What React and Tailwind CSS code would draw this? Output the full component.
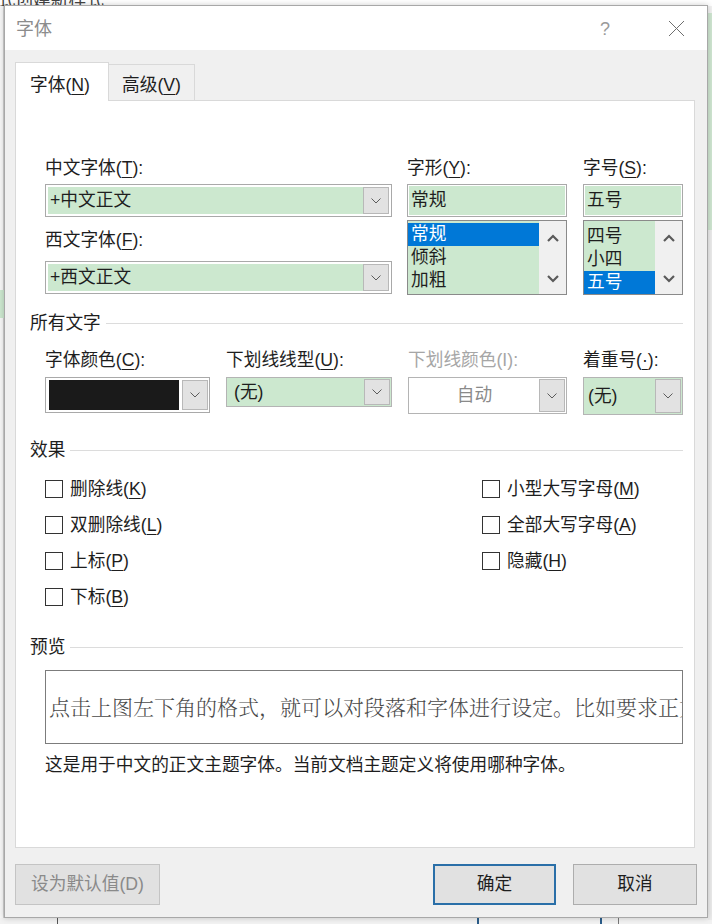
import React from 'react';

// 下划线快捷键字母
const K = ({ c }) => <span className="underline underline-offset-[3px] decoration-1">{c}</span>;

const Chevron = () => (
  <svg width="10" height="6" viewBox="0 0 10 6">
    <path d="M0.5 0.5 L5 5 L9.5 0.5" fill="none" stroke="#5c5c5c" strokeWidth="1" />
  </svg>
);

const ArrowUp = () => (
  <svg width="12" height="8" viewBox="0 0 12 8">
    <path d="M1 7 L6 2 L11 7" fill="none" stroke="#5a5a5a" strokeWidth="2.2" />
  </svg>
);

const ArrowDown = () => (
  <svg width="12" height="8" viewBox="0 0 12 8">
    <path d="M1 1 L6 6 L11 1" fill="none" stroke="#5a5a5a" strokeWidth="2.2" />
  </svg>
);

const DropBtn = () => (
  <div className="w-[26px] h-full flex items-center justify-center border border-[#b8b8b8] bg-[#e2e2e2]">
    <Chevron />
  </div>
);

const Label = ({ children, disabled }) => (
  <div
    className={
      disabled
        ? 'h-[24px] leading-[24px] whitespace-nowrap text-[#a6a6a6]'
        : 'h-[24px] leading-[24px] whitespace-nowrap text-[#1e1e1e]'
    }
  >
    {children}
  </div>
);

const Section = ({ title }) => (
  <div className="h-[24px] flex items-center">
    <span className="leading-[24px] text-[#1e1e1e]">{title}</span>
    <div className="flex-1 ml-[5px] h-px bg-[#dcdcdc]" />
  </div>
);

const GreenCombo = ({ text }) => (
  <div className="h-[33px] border border-[#a9a9a9] bg-white p-[2px] flex">
    <div className="flex-1 bg-[#cce8cf] flex items-center pl-[2px] text-[#1e1e1e]">{text}</div>
    <DropBtn />
  </div>
);

const ListBox = ({ items, selected, pt }) => (
  <div className="mt-[3px] h-[75px] border border-[#8a8a8a] bg-[#cce8cf] flex">
    <div className={pt}>
      {items.map((it) => (
        <div
          key={it}
          className={
            it === selected
              ? 'h-[23px] leading-[23px] pl-[3px] bg-[#0078d7] text-white'
              : 'h-[23px] leading-[23px] pl-[3px] text-[#1e1e1e]'
          }
        >
          {it}
        </div>
      ))}
    </div>
    <div className="w-[27px] bg-[#f0f0f0] flex flex-col items-center justify-between pt-[13px] pb-[11px]">
      <ArrowUp />
      <ArrowDown />
    </div>
  </div>
);

const Check = ({ label, k }) => (
  <div className="h-[36px] flex items-center">
    <div className="w-[18px] h-[18px] border border-[#333] bg-white" />
    <span className="ml-[7px] text-[#1e1e1e] whitespace-nowrap">
      {label}(<K c={k} />)
    </span>
  </div>
);

export default function App() {
  return (
    <div className="relative w-[712px] h-[924px] overflow-hidden bg-[#f2f2f2] font-['Liberation_Sans','Noto_Sans_CJK_SC',sans-serif] text-[17.7px]">
      {/* 背景里的 Word 窗口碎片 */}
      <div className="absolute left-0 top-0 w-[712px] h-[6px] bg-white overflow-hidden">
        <div className="absolute left-[-20px] top-[-13px] text-[#444] whitespace-nowrap">格式创建新样式</div>
      </div>
      <div className="absolute left-0 top-[6px] w-[4px] h-[912px] bg-[#f7f7f7] border-r border-[#cfcfcf]" />
      <div className="absolute left-0 top-[290px] w-[4px] h-[28px] bg-[#cce8cf]" />
      <div className="absolute right-0 top-[13px] w-[4px] h-[217px] bg-[#cfe6d1]" />
      <div className="absolute right-0 top-[230px] w-[4px] h-[690px] bg-[#ececec]" />
      <div className="absolute left-[57px] top-[918px] w-px h-[6px] bg-[#555]" />
      <div className="absolute left-[477px] top-[918px] w-[2px] h-[6px] bg-[#2a5d8a]" />
      <div className="absolute left-[600px] top-[918px] w-[2px] h-[6px] bg-[#2a5d8a]" />
      <div className="absolute left-[618px] top-[918px] w-px h-[6px] bg-[#777]" />

      {/* 对话框 */}
      <div className="absolute left-[4px] top-[5px] w-[704px] h-[913px] border border-[#a8a8a8] bg-[#f0f0f0] flex flex-col shadow-[0_0_6px_rgba(0,0,0,0.2)]">
        {/* 标题栏 */}
        <div className="h-[44px] bg-white flex items-center pl-[11px] pr-[22px]">
          <span className="text-[18px] text-[#8c8c8c] pt-[2px]">字体</span>
          <span className="ml-auto text-[18px] text-[#9a9a9a] pt-[2px]">?</span>
          <svg className="ml-[58px]" width="17" height="17" viewBox="0 0 17 17">
            <path d="M1 1 L16 16 M16 1 L1 16" stroke="#6e6e6e" strokeWidth="1" />
          </svg>
        </div>

        <div className="flex-1 flex flex-col pl-[10px] pr-[12px]">
          {/* 选项卡 */}
          <div className="mt-[12px] flex items-end">
            <div className="relative z-10 -mb-px w-[94px] h-[39px] bg-white border border-b-0 border-[#d9d9d9] flex items-center pl-[14px] pt-[6px] text-[#1e1e1e]">
              字体(<K c="N" />)
            </div>
            <div className="w-[86px] h-[36px] bg-[#f0f0f0] border border-l-0 border-b-0 border-[#d9d9d9] flex items-center pl-[13px] pt-[6px] text-[#1e1e1e]">
              高级(<K c="V" />)
            </div>
          </div>

          {/* 面板 */}
          <div className="h-[748px] bg-white border border-[#d9d9d9] pl-[14px] pr-[11px] pt-[55px]">
            <div className="ml-[15px] flex">
              <div className="w-[347px]">
                <Label>中文字体(<K c="T" />):</Label>
                <div className="mt-[4px]">
                  <GreenCombo text="+中文正文" />
                </div>
                <div className="mt-[11px]">
                  <Label>西文字体(<K c="F" />):</Label>
                </div>
                <div className="mt-[9px]">
                  <GreenCombo text="+西文正文" />
                </div>
              </div>
              <div className="ml-[15px] w-[160px]">
                <Label>字形(<K c="Y" />):</Label>
                <div className="mt-[4px] h-[33px] border border-[#a9a9a9] bg-white p-px">
                  <div className="h-full bg-[#cce8cf] flex items-center pl-[2px] text-[#1e1e1e]">常规</div>
                </div>
                <ListBox items={['常规', '倾斜', '加粗']} selected="常规" pt="flex-1 pt-[2px]" />
              </div>
              <div className="ml-[16px] w-[100px]">
                <Label>字号(<K c="S" />):</Label>
                <div className="mt-[4px] h-[33px] border border-[#a9a9a9] bg-white p-px">
                  <div className="h-full bg-[#cce8cf] flex items-center pl-[2px] text-[#1e1e1e]">五号</div>
                </div>
                <ListBox items={['四号', '小四', '五号']} selected="五号" pt="flex-1 pt-[4px]" />
              </div>
            </div>

            <div className="mt-[16px]">
              <Section title="所有文字" />
            </div>

            <div className="ml-[15px] mt-[13px] flex items-start">
              <div className="w-[165px]">
                <Label>字体颜色(<K c="C" />):</Label>
                <div className="mt-[5px] h-[36px] border border-[#a9a9a9] bg-white flex pl-[3px] pr-px py-[2px]">
                  <div className="flex-1 bg-[#1a1a1a]" />
                  <div className="ml-[3px]">
                    <DropBtn />
                  </div>
                </div>
              </div>
              <div className="ml-[16px] w-[166px]">
                <Label>下划线线型(<K c="U" />):</Label>
                <div className="mt-[5px] h-[30px] border border-[#b4b4b4] bg-[#cce8cf] flex p-px">
                  <div className="flex-1 flex items-center pl-[6px] text-[#1e1e1e]">(无)</div>
                  <DropBtn />
                </div>
              </div>
              <div className="ml-[16px] w-[159px]">
                <Label disabled>下划线颜色(I):</Label>
                <div className="mt-[5px] h-[37px] border border-[#b4b4b4] bg-white flex p-px">
                  <div className="flex-1 flex items-center justify-center text-[#8a8a8a]">自动</div>
                  <DropBtn />
                </div>
              </div>
              <div className="ml-[16px] w-[100px]">
                <Label>着重号(<K c="·" />):</Label>
                <div className="mt-[5px] h-[38px] border border-[#b4b4b4] bg-[#cce8cf] flex p-px">
                  <div className="flex-1 flex items-center pl-[3px] text-[#1e1e1e]">(无)</div>
                  <DropBtn />
                </div>
              </div>
            </div>

            <div className="mt-[23px]">
              <Section title="效果" />
            </div>

            <div className="ml-[15px] mt-[9px] grid grid-cols-[437px_1fr]">
              <Check label="删除线" k="K" />
              <Check label="小型大写字母" k="M" />
              <Check label="双删除线" k="L" />
              <Check label="全部大写字母" k="A" />
              <Check label="上标" k="P" />
              <Check label="隐藏" k="H" />
              <Check label="下标" k="B" />
            </div>

            <div className="mt-[20px]">
              <Section title="预览" />
            </div>

            <div className="ml-[15px] mt-[11px] h-[74px] border border-[#7c7c7c] flex items-center overflow-hidden pl-[3px]">
              <span className="whitespace-nowrap text-[21px] text-[#4a4a4a] font-['Liberation_Serif','Noto_Serif_CJK_SC','Noto_Sans_CJK_SC',serif] font-light pt-[3px]">
                点击上图左下角的格式，就可以对段落和字体进行设定。比如要求正文使用宋体五号字
              </span>
            </div>

            <div className="ml-[15px] mt-[9px] h-[24px] leading-[24px] text-[#1e1e1e] whitespace-nowrap">
              这是用于中文的正文主题字体。当前文档主题定义将使用哪种字体。
            </div>
          </div>

          {/* 底部按钮 */}
          <div className="mt-[16px] flex items-center pr-[-2px]">
            <div className="w-[145px] h-[41px] border border-[#c4c4c4] bg-[#e1e1e1] flex items-center justify-center text-[#8a8a8a]">
              设为默认值(D)
            </div>
            <div className="ml-auto w-[123px] h-[41px] border-2 border-[#2a6fa8] bg-[#e1e1e1] flex items-center justify-center text-[#1e1e1e]">
              确定
            </div>
            <div className="ml-[17px] -mr-[2px] w-[124px] h-[41px] border border-[#adadad] bg-[#e1e1e1] flex items-center justify-center text-[#1e1e1e]">
              取消
            </div>
          </div>
        </div>
      </div>
    </div>
  );
}
